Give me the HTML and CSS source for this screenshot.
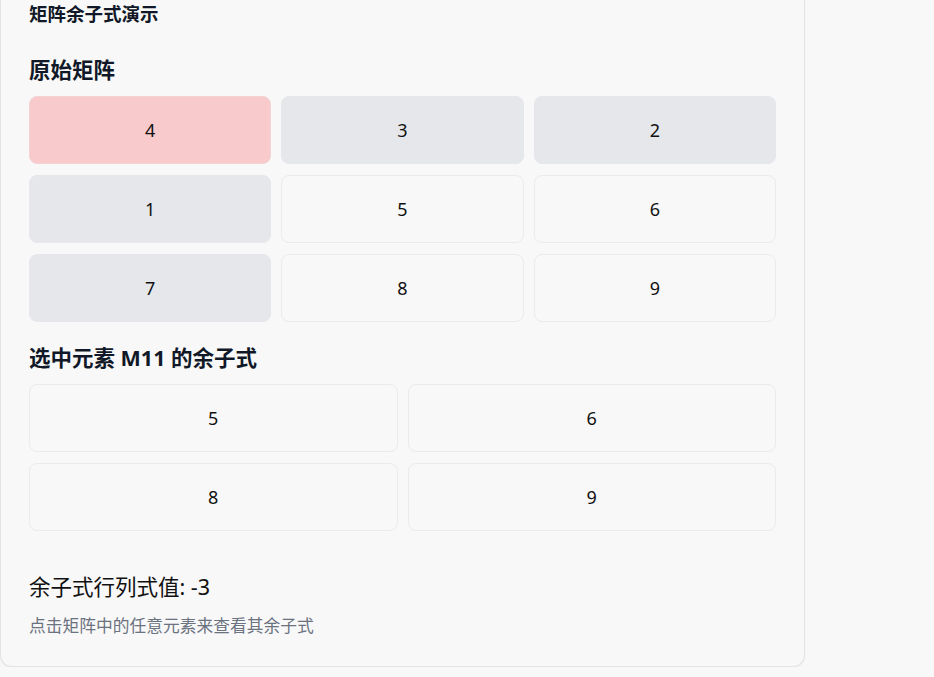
FILE: index.html
```html
<!DOCTYPE html>
<html lang="zh-CN">
<head>
<meta charset="utf-8">
<title>矩阵余子式演示</title>
<link rel="stylesheet" href="styles.css">
</head>
<body>
<div class="card">
  <h1 class="title">矩阵余子式演示</h1>
  <h2 class="section">原始矩阵</h2>
  <div class="grid grid-3">
    <div class="cell selected">4</div>
    <div class="cell related">3</div>
    <div class="cell related">2</div>
    <div class="cell related">1</div>
    <div class="cell">5</div>
    <div class="cell">6</div>
    <div class="cell related">7</div>
    <div class="cell">8</div>
    <div class="cell">9</div>
  </div>
  <h2 class="section section-2">选中元素 M11 的余子式</h2>
  <div class="grid grid-2">
    <div class="cell">5</div>
    <div class="cell">6</div>
    <div class="cell">8</div>
    <div class="cell">9</div>
  </div>
  <p class="result">余子式行列式值: -3</p>
  <p class="hint">点击矩阵中的任意元素来查看其余子式</p>
</div>
</body>
</html>
```
FILE: styles.css
```css
* { box-sizing: border-box; }
html, body {
  margin: 0;
  padding: 0;
  background: #f8f8f8;
}
body {
  font-family: "Noto Sans", "Noto Sans CJK SC", sans-serif;
  color: #111827;
}
.card {
  width: 805px;
  border: 1px solid #e3e3e5;
  border-top: 0;
  border-radius: 0 0 12px 12px;
  padding: 0 28px 30px 28px;
  background: #f8f8f8;
  box-shadow: 0 1px 2px rgba(0,0,0,0.05);
}
.title {
  margin: 0;
  font-size: 18.5px;
  line-height: 28px;
  font-weight: 700;
}
.section {
  margin: 28px 0 12px;
  font-size: 21.5px;
  line-height: 28px;
  font-weight: 700;
}
.section-2 {
  margin-top: 22px;
}
.grid {
  display: grid;
  gap: 11px 10px;
}
.grid-3 { grid-template-columns: repeat(3, 1fr); }
.grid-2 { grid-template-columns: repeat(2, 1fr); }
.cell {
  height: 68px;
  display: flex;
  align-items: center;
  justify-content: center;
  border: 1px solid #ebebed;
  border-radius: 8px;
  font-size: 18px;
  color: #111;
}
.cell.related {
  background: #e5e7eb;
  border-color: #e5e7eb;
}
.cell.selected {
  background: #f8cacc;
  border-color: #f3d3d4;
}
.result {
  margin: 42px 0 0;
  font-size: 21.5px;
  line-height: 28px;
  color: #111;
}
.hint {
  margin: 15px 0 0;
  font-size: 16.75px;
  line-height: 20px;
  color: #6b7280;
}
```
